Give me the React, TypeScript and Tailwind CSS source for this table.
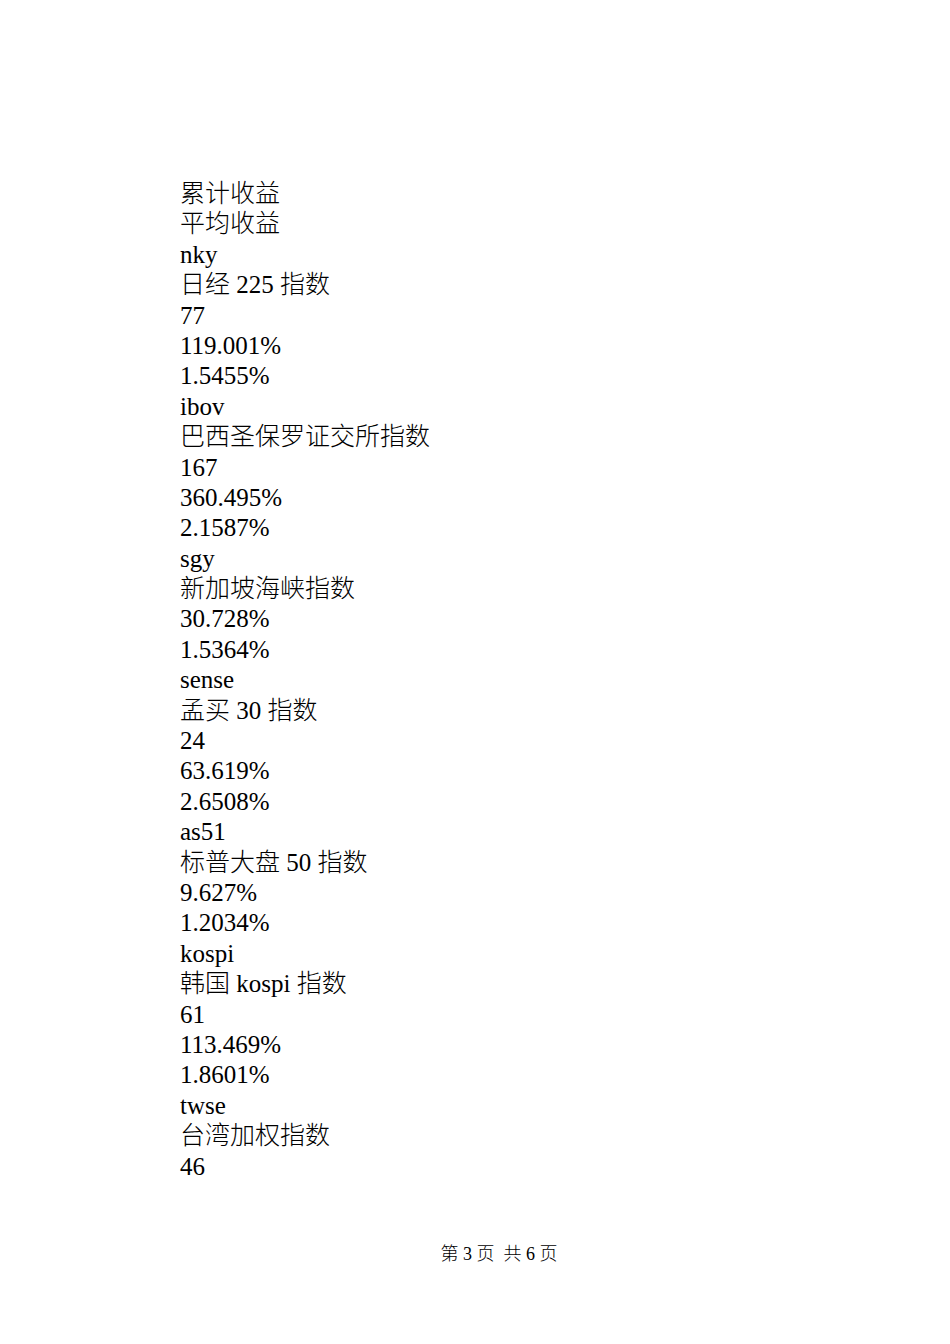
import React from "react";

const lines: string[] = [
  "累计收益",
  "平均收益",
  "nky",
  "日经 225 指数",
  "77",
  "119.001%",
  "1.5455%",
  "ibov",
  "巴西圣保罗证交所指数",
  "167",
  "360.495%",
  "2.1587%",
  "sgy",
  "新加坡海峡指数",
  "30.728%",
  "1.5364%",
  "sense",
  "孟买 30 指数",
  "24",
  "63.619%",
  "2.6508%",
  "as51",
  "标普大盘 50 指数",
  "9.627%",
  "1.2034%",
  "kospi",
  "韩国 kospi 指数",
  "61",
  "113.469%",
  "1.8601%",
  "twse",
  "台湾加权指数",
  "46",
];

const App: React.FC = () => {
  return (
    <div className="flex flex-col h-[1344px] w-[950px] bg-white text-black font-['Liberation_Serif','Noto_Sans_CJK_SC',serif] font-light">
      <div className="pt-[179px] pl-[180px] flex flex-col">
        {lines.map((line, i) => (
          <div key={i} className="text-[25px] leading-[30.4px] h-[30.4px] whitespace-pre">
            {line}
          </div>
        ))}
      </div>
      <div className="mt-auto pb-[78px] pl-[48px] flex justify-center text-[18px] leading-[24px]">
        第 3 页&nbsp;&nbsp;共 6 页
      </div>
    </div>
  );
};

export default App;
